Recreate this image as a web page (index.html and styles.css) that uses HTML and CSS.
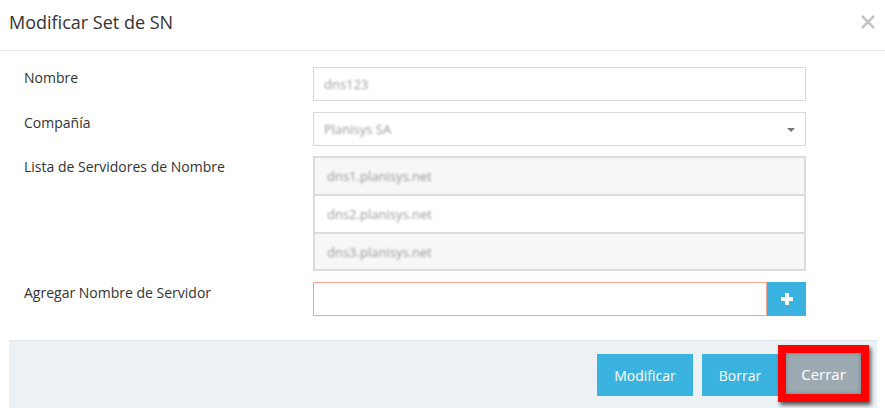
FILE: index.html
```html
<!DOCTYPE html>
<html lang="es">
<head>
<meta charset="utf-8">
<title>Modificar Set de SN</title>
<link rel="stylesheet" href="styles.css">
</head>
<body>
<div class="modal">
  <div class="modal-header">
    <h1 class="title">Modificar Set de SN</h1>
    <span class="close">
      <svg width="16" height="16" viewBox="0 0 16 16"><path d="M2 2L14 14M14 2L2 14" stroke="#c4c4c4" stroke-width="2.6" fill="none"/></svg>
    </span>
  </div>
  <div class="modal-body">
    <div class="row">
      <label class="label">Nombre</label>
      <div class="input"><span class="val">dns123</span></div>
    </div>
    <div class="row">
      <label class="label">Compañía</label>
      <div class="input select"><span class="val">Planisys SA</span><span class="caret"></span></div>
    </div>
    <div class="row list-row">
      <label class="label">Lista de Servidores de Nombre</label>
      <ul class="list">
        <li class="item odd"><span class="val">dns1.planisys.net</span></li>
        <li class="item"><span class="val">dns2.planisys.net</span></li>
        <li class="item odd"><span class="val">dns3.planisys.net</span></li>
      </ul>
    </div>
    <div class="row">
      <label class="label">Agregar Nombre de Servidor</label>
      <div class="group">
        <div class="input invalid"></div>
        <button class="plus" type="button">
          <svg width="14" height="14" viewBox="0 0 14 14"><path d="M5 1h4v4h4v4H9v4H5V9H1V5h4z" fill="#fff"/></svg>
        </button>
      </div>
    </div>
  </div>
  <div class="modal-footer">
    <button class="btn" type="button">Modificar</button>
    <button class="btn borrar" type="button">Borrar</button>
    <button class="btn cerrar" type="button">Cerrar</button>
  </div>
</div>
</body>
</html>
```
FILE: styles.css
```css
html, body {
  margin: 0;
  padding: 0;
  background: #fff;
}
body {
  font-family: "Open Sans", "Liberation Sans", sans-serif;
  color: #333;
  width: 885px;
  height: 408px;
  overflow: hidden;
}
.modal {
  width: 885px;
}
.modal-header {
  height: 51px;
  border-bottom: 1px solid #e5e5e5;
  display: flex;
  align-items: center;
  justify-content: space-between;
  padding: 0 9px 0 9px;
  box-sizing: border-box;
}
.title {
  margin: 0 0 6px 0;
  font-size: 18px;
  font-weight: 400;
  color: #333;
}
.close {
  display: flex;
  margin-bottom: 6px;
}
.modal-body {
  padding: 16px 0 24px 24px;
  display: flex;
  flex-direction: column;
  gap: 11px;
}
.row {
  display: grid;
  grid-template-columns: 289px 493px;
  align-items: start;
}
.list-row {
  margin-top: -1px;
}
.label {
  font-size: 14px;
  color: #333;
  padding-top: 1px;
  line-height: 20px;
}
.input {
  height: 34px;
  box-sizing: border-box;
  border: 1px solid #d9d9d9;
  background: #fff;
  display: flex;
  align-items: center;
  padding: 0 10px;
  position: relative;
}
.val {
  font-size: 13px;
  color: #9a9a9a;
  filter: blur(0.9px);
}
.select .caret {
  position: absolute;
  right: 10px;
  top: 15px;
  width: 0;
  height: 0;
  border-left: 4px solid transparent;
  border-right: 4px solid transparent;
  border-top: 4px solid #777;
}
.list {
  list-style: none;
  margin: 0;
  padding: 0;
  border: 2px solid #dcdcdc;
}
.item {
  height: 36px;
  display: flex;
  align-items: center;
  padding: 0 12px;
  background: #fff;
  border-top: 2px solid #dcdcdc;
}
.item:first-child {
  border-top: none;
}
.item:last-child {
  height: 35px;
}
.item.odd {
  background: #f7f7f7;
}
.group {
  display: flex;
}
.input.invalid {
  flex: 1;
  border-color: #f7a592;
}
.plus {
  width: 39px;
  height: 34px;
  border: none;
  background: #3bb3e0;
  display: flex;
  align-items: center;
  justify-content: center;
  padding: 0;
}
.modal-footer {
  margin: 0 8px 0 9px;
  background: #ecf1f5;
  border-top: 1px solid #e2e7eb;
  height: 68px;
  display: flex;
  justify-content: flex-end;
  align-items: center;
  gap: 9px;
  padding-right: 8px;
  box-sizing: border-box;
}
.btn {
  font-family: "Open Sans", "Liberation Sans", sans-serif;
  font-size: 14px;
  color: #fff;
  background: #3bb3e0;
  border: none;
  height: 42px;
  width: 96px;
  padding: 0;
  margin-top: 1px;
}
.borrar {
  width: 76px;
}
.cerrar {
  margin-left: -9px;
  width: 91px;
  height: 57px;
  margin-top: -2px;
  font-size: 15px;
  background: #9eaab2;
  border: 8px solid #ff0000;
  box-shadow: 2px 3px 4px rgba(0, 0, 0, 0.65), inset 0 0 4px rgba(60, 80, 90, 0.5);
}
```
